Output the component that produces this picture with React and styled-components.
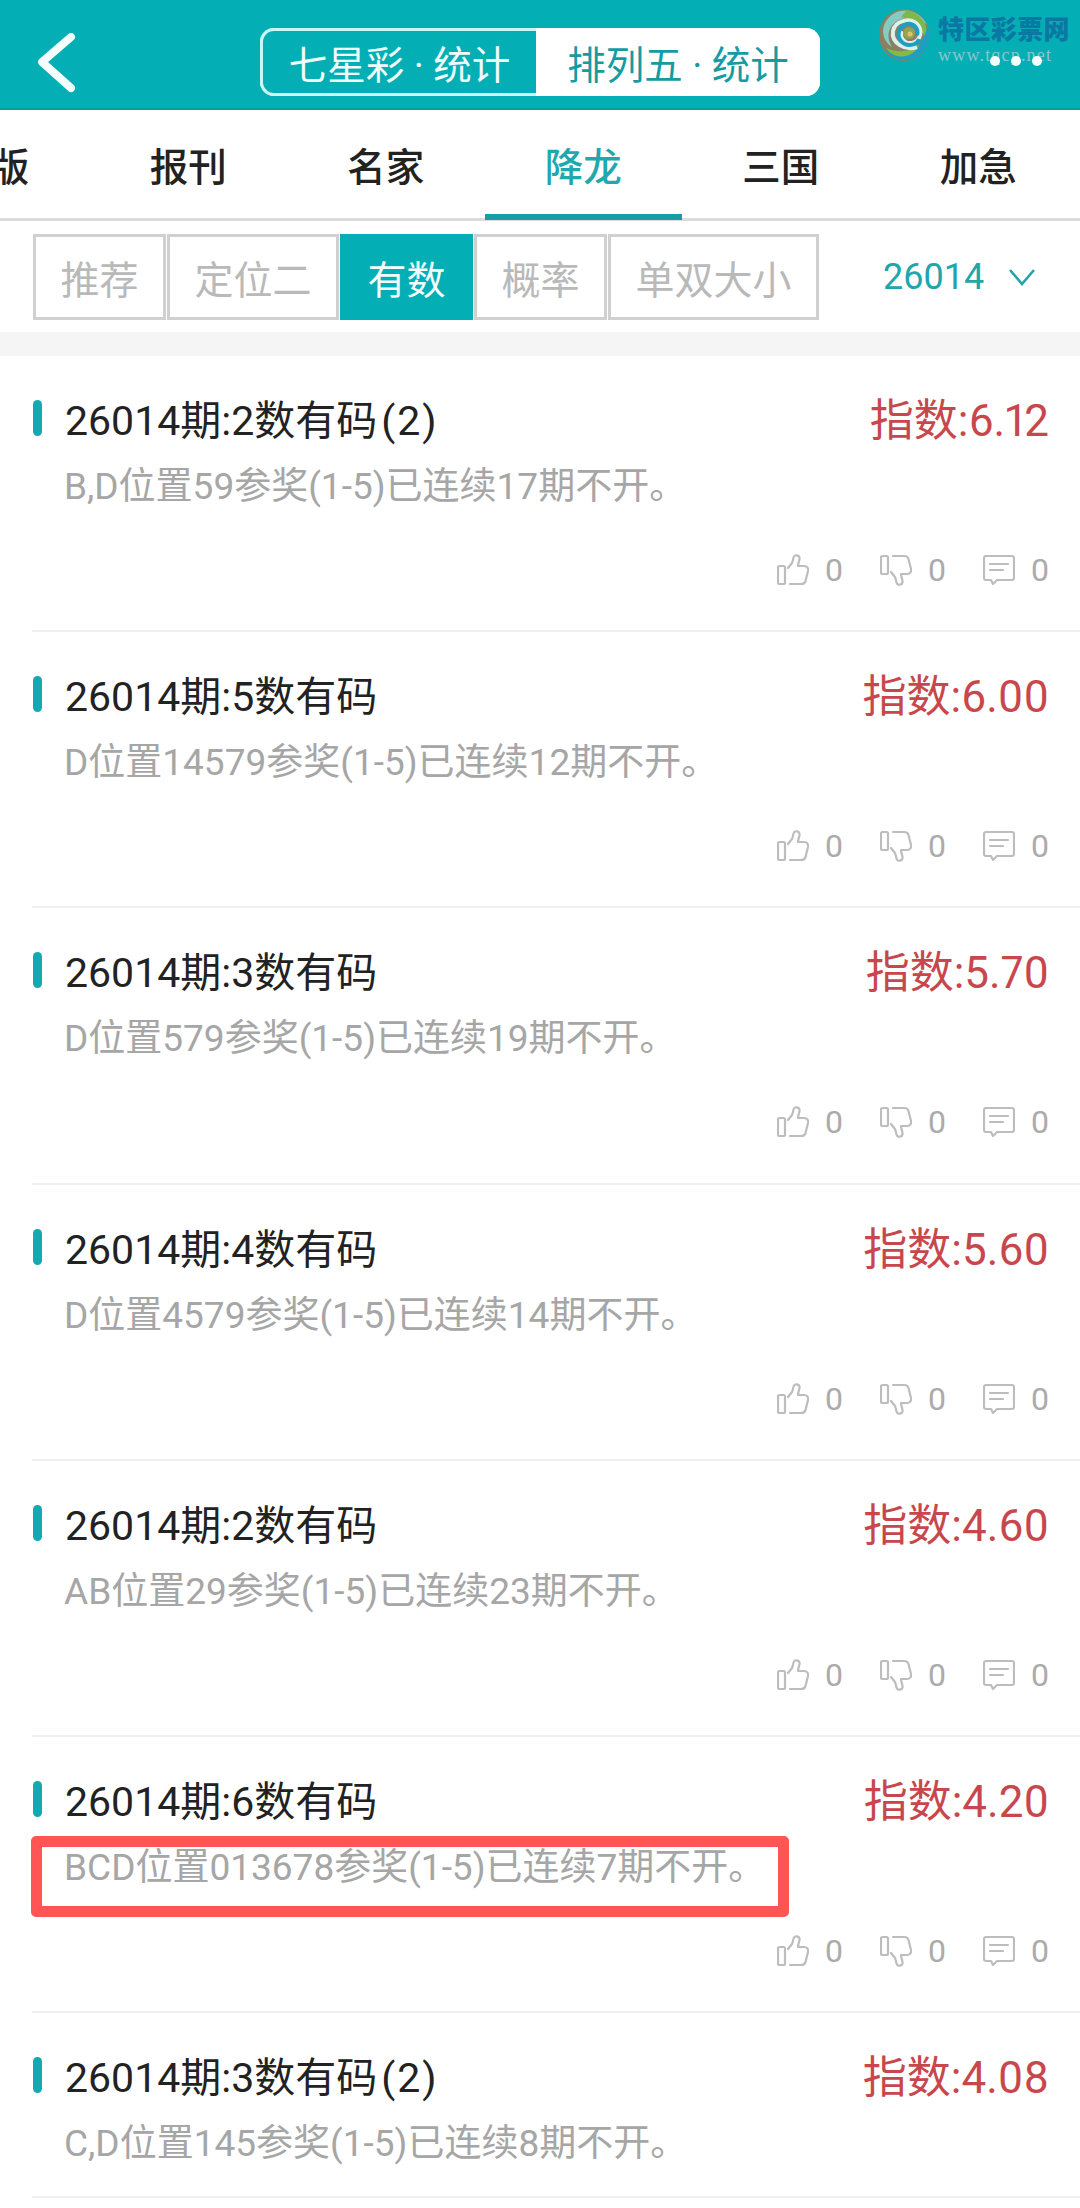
import React from "react";
import styled, { createGlobalStyle } from "styled-components";

const TEAL = "#03afb5";
const SANS = `Roboto, "Noto Sans CJK SC", sans-serif`;

const GlobalStyle = createGlobalStyle`
  html, body { margin: 0; padding: 0; background: #fff; }
  * { box-sizing: border-box; }
`;

const Page = styled.div`
  position: relative;
  width: 1080px;
  height: 2208px;
  overflow: hidden;
  background: #fff;
  font-family: ${SANS};
`;

const Header = styled.header`
  position: relative;
  height: 110px;
  background: ${TEAL};
  border-bottom: 2px solid #0a9ca2;
  display: flex;
  align-items: flex-start;
  padding: 28px 0 0 38px;
`;

const BackIcon = styled.svg`
  width: 38px;
  height: 60px;
  margin-top: 5px;
  flex: none;
`;

const Segment = styled.div`
  display: flex;
  width: 560px;
  height: 68px;
  margin-left: 184px;
  background: #fff;
  border-radius: 14px;
  overflow: hidden;
`;

const SegmentItem = styled.div`
  display: flex;
  align-items: center;
  justify-content: center;
  flex: ${(p) => (p.$active ? "0 0 276px" : "1")};
  font-size: 38.5px;
  white-space: pre;
  color: ${(p) => (p.$active ? "#eefcfb" : "#159ca3")};
  background: ${(p) => (p.$active ? TEAL : "#fff")};
  border: ${(p) => (p.$active ? "3px solid #c8f8f6" : "none")};
  border-right: none;
  border-radius: 14px 0 0 14px;
`;

const Watermark = styled.div`
  position: absolute;
  left: 879px;
  top: 9px;
  display: flex;
  gap: 9px;
`;

const WatermarkText = styled.div`
  display: flex;
  flex-direction: column;
  gap: 2px;
  padding-top: 7px;
`;

const WatermarkName = styled.span`
  font-size: 26px;
  line-height: 28px;
  font-weight: 900;
  letter-spacing: 0.4px;
  color: #0b78a3;
  white-space: nowrap;
`;

const WatermarkUrl = styled.span`
  font-family: "Liberation Serif", serif;
  font-size: 18px;
  line-height: 18px;
  letter-spacing: 1.2px;
  color: #86c8ca;
  white-space: nowrap;
`;

const MoreDots = styled.div`
  position: absolute;
  left: 990px;
  top: 56px;
  display: flex;
  gap: 11px;
`;

const Dot = styled.i`
  width: 10px;
  height: 10px;
  border-radius: 50%;
  background: #f2ffff;
`;

const Tabs = styled.nav`
  display: flex;
  height: 111px;
  margin-left: -108px;
  width: 1188px;
  border-bottom: 3px solid #dcdcdc;
`;

const Tab = styled.div`
  position: relative;
  flex: none;
  width: 197.5px;
  display: flex;
  align-items: center;
  justify-content: center;
  font-size: 38.5px;
  font-weight: 500;
  color: ${(p) => (p.$active ? "#1fa9ae" : "#222")};
  &::after {
    content: "";
    display: ${(p) => (p.$active ? "block" : "none")};
    position: absolute;
    left: 0;
    right: 0;
    bottom: -2px;
    height: 6px;
    background: #149fa6;
  }
`;

const FilterBar = styled.div`
  display: flex;
  align-items: center;
  height: 135px;
  padding: 13px 0 12px 33px;
  border-bottom: 24px solid #f5f5f5;
`;

const Filters = styled.div`
  display: flex;
  height: 86px;
`;

const Filter = styled.div`
  display: flex;
  align-items: center;
  justify-content: center;
  padding: 0 24.5px;
  margin-right: ${(p) => (p.$last ? 0 : "1px")};
  font-size: 39px;
  white-space: nowrap;
  border: 3px solid ${(p) => (p.$active ? TEAL : "#d0d0d0")};
  color: ${(p) => (p.$active ? "#f3fdfd" : "#b9b9b9")};
  background: ${(p) => (p.$active ? TEAL : "#fff")};
`;

const IssuePicker = styled.div`
  display: flex;
  align-items: center;
  gap: 24px;
  margin-left: 64px;
  font-size: 36px;
  color: #1fa6ab;
`;

const Card = styled.article`
  position: relative;
  height: ${(p) => (p.$compact ? "185px" : "276.2px")};
  margin-left: 32px;
  padding: 37px 31px 0 0;
  border-bottom: 2px solid #f0f0f0;
`;

const TitleRow = styled.div`
  display: flex;
  align-items: center;
  justify-content: space-between;
  height: 48px;
`;

const Title = styled.h3`
  display: flex;
  align-items: center;
  gap: 23px;
  margin: 0;
  font-size: 41px;
  font-weight: 400;
  color: #222;
  white-space: nowrap;
  &::before {
    content: "";
    width: 9px;
    height: 36px;
    margin-top: 2px;
    margin-left: 1px;
    border-radius: 5px;
    background: #12a9b0;
  }
`;

const Repeat = styled.span`
  margin-left: 4px;
  letter-spacing: 2px;
`;

const Score = styled.span`
  font-size: 44px;
  font-variant-numeric: proportional-nums;
  color: #c8474c;
  white-space: nowrap;
`;

const Desc = styled.p`
  margin: 25px 0 0 32px;
  font-size: 37px;
  line-height: 42px;
  color: #a6a6a6;
  white-space: nowrap;
`;

const Actions = styled.div`
  display: flex;
  justify-content: flex-end;
  gap: 37px;
  margin-top: 45px;
`;

const Action = styled.div`
  display: flex;
  align-items: center;
  gap: 16px;
  font-size: 32px;
  line-height: 34px;
  color: #ababab;
`;

const ActionIcon = styled.svg`
  width: 32px;
  height: 32px;
  fill: none;
  stroke: #bdbdbd;
  stroke-width: 2.2;
  stroke-linecap: round;
  stroke-linejoin: round;
  transform: ${(p) => (p.$flip ? "scaleY(-1)" : "none")};
`;

const Highlight = styled.div`
  position: absolute;
  left: -1px;
  top: 99px;
  width: 758px;
  height: 81px;
  border: 11px solid #ff5555;
  border-radius: 5px;
`;

const tabs = ["图版", "报刊", "名家", "降龙", "三国", "加急"];
const filters = ["推荐", "定位二", "有数", "概率", "单双大小"];
const rows = [
  { title: "26014期:2数有码", repeat: "(2)", desc: "B,D位置59参奖(1-5)已连续17期不开。", score: "6.12" },
  { title: "26014期:5数有码", desc: "D位置14579参奖(1-5)已连续12期不开。", score: "6.00" },
  { title: "26014期:3数有码", desc: "D位置579参奖(1-5)已连续19期不开。", score: "5.70" },
  { title: "26014期:4数有码", desc: "D位置4579参奖(1-5)已连续14期不开。", score: "5.60" },
  { title: "26014期:2数有码", desc: "AB位置29参奖(1-5)已连续23期不开。", score: "4.60" },
  { title: "26014期:6数有码", desc: "BCD位置013678参奖(1-5)已连续7期不开。", score: "4.20", marked: true },
  { title: "26014期:3数有码", repeat: "(2)", desc: "C,D位置145参奖(1-5)已连续8期不开。", score: "4.08", compact: true },
];

const Thumb = ({ flip }) => (
  <ActionIcon viewBox="0 0 32 32" $flip={flip}>
    <rect x="1" y="12" width="7" height="18" rx="1.5" />
    <path d="M11 14 L15 9 C16 7 16 4 17 2.5 C18 0.5 22 1 22.5 3.5 C23 6 21 9 21 12 H27 C30 12 31.5 14 31 17 L28.5 27 C28 29.5 26 30 24 30 H13" />
  </ActionIcon>
);

const Comment = () => (
  <ActionIcon viewBox="0 0 32 32">
    <path d="M3 2 H29 C30 2 31 3 31 4 V24 C31 25 30 26 29 26 H14 L10 30 L8 26 H3 C2 26 1 25 1 24 V4 C1 3 2 2 3 2 Z" />
    <path d="M7 10 H25 M7 16 H20" />
  </ActionIcon>
);

// rough swirl of the watermark logo
const Swirl = () => (
  <svg width="50" height="52" viewBox="0 0 50 52">
    <ellipse cx="25" cy="26" rx="25" ry="26" fill="#8a7f63" />
    <path d="M6 14 C14 -2 38 -4 48 16 C38 6 20 6 12 18 C8 25 9 32 13 38 C4 32 2 22 6 14 Z" fill="#86cbc2" />
    <path d="M28 1 C44 4 53 22 47 36 C46 22 38 11 22 8 Z" fill="#7db84a" />
    <path d="M50 24 C51 40 38 52 24 51 C16 50 10 46 6 40 C18 46 36 44 42 32 C45 28 47 24 48 18 Z" fill="#1d9ec2" />
    <path d="M7 39 C20 45 34 42 41 35 C36 47 18 54 7 39 Z" fill="#86bb3f" />
    <path d="M38 38 C26 42 12 34 14 22 C16 12 30 8 38 15 C44 21 42 32 33 34 C25 35 20 28 23 22" fill="none" stroke="#dff0ea" strokeWidth="4" />
    <path d="M40 30 C38 37 27 38 22 32 C17 26 20 17 28 15 C35 14 40 20 38 26" fill="none" stroke="#1b9fc4" strokeWidth="4" />
    <circle cx="30" cy="24" r="6" fill="#96a34e" />
    <circle cx="31" cy="25" r="2.5" fill="#d8c66a" />
  </svg>
);

export default function App() {
  return (
    <Page>
      <GlobalStyle />
      <Header>
        <BackIcon viewBox="0 0 38 60">
          <path d="M33 4 L4 29 L33 55" fill="none" stroke="#f6ffff" strokeWidth="8" strokeLinecap="round" strokeLinejoin="round" />
        </BackIcon>
        <Segment>
          <SegmentItem $active>七星彩 · 统计</SegmentItem>
          <SegmentItem>排列五 · 统计</SegmentItem>
        </Segment>
        <Watermark>
          <Swirl />
          <WatermarkText>
            <WatermarkName>特区彩票网</WatermarkName>
            <WatermarkUrl>www.tqcp.net</WatermarkUrl>
          </WatermarkText>
        </Watermark>
        <MoreDots>
          <Dot />
          <Dot />
          <Dot />
        </MoreDots>
      </Header>
      <Tabs>
        {tabs.map((t) => (
          <Tab key={t} $active={t === "降龙"}>
            {t}
          </Tab>
        ))}
      </Tabs>
      <FilterBar>
        <Filters>
          {filters.map((f, i) => (
            <Filter key={f} $active={f === "有数"} $last={i === filters.length - 1}>
              {f}
            </Filter>
          ))}
        </Filters>
        <IssuePicker>
          26014
          <svg width="28" height="18" viewBox="0 0 28 18">
            <path d="M2 2 L14 16 L26 2" fill="none" stroke="#1fa6ab" strokeWidth="2.6" />
          </svg>
        </IssuePicker>
      </FilterBar>
      {rows.map((r) => (
        <Card key={r.desc} $compact={r.compact}>
          <TitleRow>
            <Title>
              <span>
                {r.title}
                {r.repeat && <Repeat>{r.repeat}</Repeat>}
              </span>
            </Title>
            <Score>指数:{r.score}</Score>
          </TitleRow>
          <Desc>{r.desc}</Desc>
          {!r.compact && (
            <Actions>
              <Action>
                <Thumb />0
              </Action>
              <Action>
                <Thumb flip />0
              </Action>
              <Action>
                <Comment />0
              </Action>
            </Actions>
          )}
          {r.marked && <Highlight />}
        </Card>
      ))}
    </Page>
  );
}
